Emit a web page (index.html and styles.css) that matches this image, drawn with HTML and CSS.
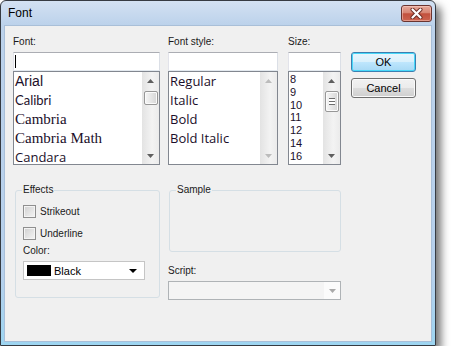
FILE: index.html
```html
<!DOCTYPE html>
<html>
<head>
<meta charset="utf-8">
<title>Font</title>
<link rel="stylesheet" href="styles.css">
</head>
<body>
<div class="window">
  <div class="titlebar">
    <span class="title">Font</span>
    <span class="close">
      <svg width="13" height="11" viewBox="0 0 13 11">
        <path d="M2.5 1.5 L10.5 9.5 M10.5 1.5 L2.5 9.5" stroke="#6b2a22" stroke-width="4" stroke-linecap="round"/>
        <path d="M2.5 1.5 L10.5 9.5 M10.5 1.5 L2.5 9.5" stroke="#ffffff" stroke-width="2.2" stroke-linecap="round"/>
      </svg>
    </span>
  </div>

  <div class="client">
    <div class="top">
      <div class="col-font">
        <div class="label">Font:</div>
        <div class="input"><span class="caret"></span></div>
        <div class="list">
          <ul class="items font-items">
            <li class="f-arial">Arial</li>
            <li class="f-calibri">Calibri</li>
            <li class="f-cambria">Cambria</li>
            <li class="f-cambria">Cambria Math</li>
            <li class="f-candara">Candara</li>
          </ul>
          <div class="scroll">
            <div class="arr"><svg width="7" height="4"><path d="M0 4 L3.5 0 L7 4 Z" fill="#5f5f5f"/></svg></div>
            <div class="thumb font-thumb"></div>
            <div class="fill"></div>
            <div class="arr"><svg width="7" height="4"><path d="M0 0 L3.5 4 L7 0 Z" fill="#5f5f5f"/></svg></div>
          </div>
        </div>
      </div>

      <div class="col-style">
        <div class="label">Font style:</div>
        <div class="input"></div>
        <div class="list">
          <ul class="items style-items">
            <li>Regular</li>
            <li>Italic</li>
            <li>Bold</li>
            <li>Bold Italic</li>
          </ul>
          <div class="scroll">
            <div class="arr"><svg width="7" height="4"><path d="M0 4 L3.5 0 L7 4 Z" fill="#bcbcbc"/></svg></div>
            <div class="fill"></div>
            <div class="arr"><svg width="7" height="4"><path d="M0 0 L3.5 4 L7 0 Z" fill="#bcbcbc"/></svg></div>
          </div>
        </div>
      </div>

      <div class="col-size">
        <div class="label">Size:</div>
        <div class="input"></div>
        <div class="list">
          <ul class="items size-items">
            <li>8</li>
            <li>9</li>
            <li>10</li>
            <li>11</li>
            <li>12</li>
            <li>14</li>
            <li>16</li>
          </ul>
          <div class="scroll">
            <div class="arr"><svg width="7" height="4"><path d="M0 4 L3.5 0 L7 4 Z" fill="#5f5f5f"/></svg></div>
            <div class="thumb size-thumb"><span class="grip"></span></div>
            <div class="fill"></div>
            <div class="arr"><svg width="7" height="4"><path d="M0 0 L3.5 4 L7 0 Z" fill="#5f5f5f"/></svg></div>
          </div>
        </div>
      </div>

      <div class="buttons">
        <button class="btn default">OK</button>
        <button class="btn">Cancel</button>
      </div>
    </div>

    <div class="bottom">
      <fieldset class="group effects">
        <legend>Effects</legend>
        <label class="check"><span class="box"></span>Strikeout</label>
        <label class="check"><span class="box"></span>Underline</label>
        <div class="color-label">Color:</div>
        <div class="combo color">
          <span class="swatch"></span>
          <span class="combo-text">Black</span>
          <svg class="drop" width="8" height="4"><path d="M0 0 L8 0 L4 4 Z" fill="#000"/></svg>
        </div>
      </fieldset>

      <div class="col-right">
        <fieldset class="group sample">
          <legend>Sample</legend>
        </fieldset>
        <div class="script-label">Script:</div>
        <div class="combo script">
          <span class="combo-fill"></span>
          <span class="drop-btn"><svg width="7" height="4"><path d="M0 0 L7 0 L3.5 4 Z" fill="#a9a9a9"/></svg></span>
        </div>
      </div>
    </div>
  </div>
</div>
</body>
</html>
```

FILE: styles.css
```css
body {
   margin: 0;
   background-color: white;
   font-family: "Liberation Sans", Arial, sans-serif;
   font-size: 10px;
   color: #000;
}

/* window frame */

.window {
   width: 436px;
   height: 346px;
   box-sizing: border-box;
   border: 1px solid #363b42;
   border-radius: 6px 6px 0 0;
   background: linear-gradient(#d3e1f2, #bcd2eb 24px, #b6d0ec 80%, #9dd5f1);
   box-shadow: 5px 6px 9px rgba(0, 0, 0, 0.55);
   display: flex;
   flex-direction: column;
}

.titlebar {
   height: 24px;
   display: flex;
   justify-content: space-between;
   align-items: flex-start;
}

.title {
   padding-left: 7px;
   line-height: 24px;
   font-size: 12px;
}

.close {
   margin: 4px 3px 0 0;
   width: 31px;
   height: 17px;
   box-sizing: border-box;
   border: 1px solid #6a3430;
   border-radius: 3px;
   background: linear-gradient(#e6a99b, #d78573 45%, #c2503d 52%, #cc6450);
   box-shadow: inset 0 0 0 1px rgba(255, 220, 210, 0.45);
   display: flex;
   align-items: center;
   justify-content: center;
}

.client {
   flex: 1;
   margin: 0 3px 3px;
   border: 1px solid #a9bfd8;
   background: #f0f0f0;
   padding: 9px 0 0 8px;
}

/* top row */

.top {
   display: flex;
   align-items: flex-start;
}

.col-font {
   width: 147px;
}

.col-style {
   width: 110px;
   margin-left: 8px;
}

.col-size {
   width: 53px;
   margin-left: 10px;
}

.label {
   height: 17px;
   line-height: 13px;
   color: #1a1a1a;
}

.input {
   height: 19px;
   box-sizing: border-box;
   border: 1px solid;
   border-color: #abadb3 #dbdfe6 #e3e9ef #e2e3ea;
   background: #fff;
   padding: 2px 0 0 1px;
}

.caret {
   display: block;
   width: 1px;
   height: 13px;
   background: #000;
}

.list {
   height: 94px;
   box-sizing: border-box;
   border: 1px solid #828790;
   background: #fff;
   display: flex;
}

.items {
   flex: 1;
   list-style: none;
   margin: 0;
   padding: 0 0 0 1px;
   overflow: hidden;
   white-space: nowrap;
}

.font-items li,
.style-items li {
   height: 19px;
   line-height: 19px;
   color: #1b0f2a;
}

.f-arial {
   font: 14px "Liberation Sans", Arial, sans-serif;
}

.f-calibri {
   font: 13px Lato, sans-serif;
}

.f-cambria {
   font: 15px "Liberation Serif", serif;
}

.f-candara {
   font: 13px "Open Sans", sans-serif;
}

.style-items li {
   font: 13px "Open Sans", sans-serif;
}

.size-items {
   padding-top: 1px;
}

.size-items li {
   height: 12.8px;
   line-height: 13px;
   font-size: 11px;
   color: #1b0f2a;
}

/* scrollbars */

.scroll {
   width: 17px;
   display: flex;
   flex-direction: column;
   align-items: center;
   background: linear-gradient(90deg, #e3e3e3, #f3f3f3 60%, #ebebeb);
}

.arr {
   height: 17px;
   width: 17px;
   display: flex;
   align-items: center;
   justify-content: center;
}

.fill {
   flex: 1;
}

.thumb {
   width: 14px;
   box-sizing: border-box;
   border: 1px solid #979797;
   border-radius: 2px;
   background: linear-gradient(90deg, #f6f6f6, #e6e6e6 50%, #d6d6d6);
   box-shadow: inset 0 0 0 1px #fbfbfb;
}

.font-thumb {
   height: 14px;
   margin-top: 2px;
}

.size-thumb {
   height: 21px;
   margin-top: 2px;
   display: flex;
   align-items: center;
   justify-content: center;
}

.grip {
   width: 6px;
   height: 5px;
   border-top: 1px solid #6d6d6d;
   border-bottom: 1px solid #6d6d6d;
   background: linear-gradient(#fff 0 2px, #6d6d6d 2px 3px, #fff 3px);
}

/* buttons */

.buttons {
   width: 65px;
   margin-left: 10px;
   margin-top: 17px;
   display: flex;
   flex-direction: column;
   gap: 6px;
}

.btn {
   height: 20px;
   padding: 0;
   border: 1px solid #707070;
   border-radius: 3px;
   background: linear-gradient(#f2f2f2, #ebebeb 50%, #dddddd 51%, #cfcfcf);
   box-shadow: inset 0 0 0 1px #fafafa;
   font-family: "Liberation Sans", Arial, sans-serif;
   font-size: 11px;
   color: #000;
}

.btn.default {
   border-color: #3c7fb1;
   background: linear-gradient(#eaf6fd, #d9f0fc 50%, #bee6fd 51%, #a7d9f5);
   box-shadow: inset 0 0 0 1px #48d8f9;
}

/* bottom row */

.bottom {
   display: flex;
   align-items: flex-start;
   margin-top: 18px;
}

.group {
   margin: 0;
   padding: 0 6px;
   box-sizing: border-box;
   border: 1px solid #d5dfe5;
   border-radius: 3px;
}

.group legend {
   padding: 0 1px;
   line-height: 14px;
   font-size: 10px;
   color: #1a1a1a;
}

.effects {
   width: 145px;
   height: 115px;
   margin-left: 2px;
}

.check {
   display: flex;
   align-items: center;
   height: 13px;
   margin: 8px 0 0 1px;
   color: #1a1a1a;
}

.check + .check {
   margin-top: 9px;
}

.box {
   width: 13px;
   height: 13px;
   box-sizing: border-box;
   margin-right: 4px;
   border: 1px solid #8f8f8f;
   background: linear-gradient(135deg, #d0d0d0, #f5f5f5);
   box-shadow: inset 0 0 0 1px #f4f4f4;
}

.color-label {
   margin: 4px 0 0 1px;
   line-height: 14px;
   color: #1a1a1a;
}

.combo {
   height: 19px;
   box-sizing: border-box;
   display: flex;
   align-items: center;
}

.color {
   width: 122px;
   margin: 3px 0 0 1px;
   border: 1px solid #c5c5c5;
   background: #fff;
   padding: 0 4px 0 3px;
}

.swatch {
   width: 24px;
   height: 11px;
   background: #000;
}

.combo-text {
   flex: 1;
   margin-left: 3px;
   font-size: 11px;
}

.drop {
   margin-right: 3px;
}

.col-right {
   width: 173px;
   margin-left: 8px;
}

.sample {
   width: 172px;
   height: 69px;
   margin-left: 1px;
}

.script-label {
   margin-top: 12px;
   line-height: 14px;
   color: #1a1a1a;
}

.script {
   margin-top: 3px;
   border: 1px solid #afb3b6;
   background: #f4f4f4;
}

.combo-fill {
   flex: 1;
}

.drop-btn {
   width: 16px;
   height: 17px;
   background: #fbfbfb;
   display: flex;
   align-items: center;
   justify-content: center;
}
```
